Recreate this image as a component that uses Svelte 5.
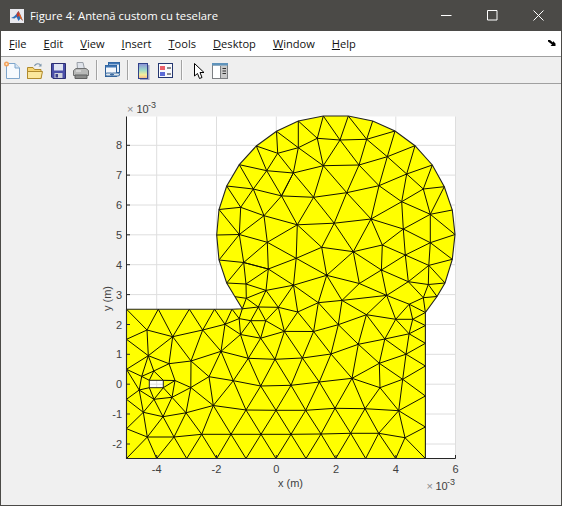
<script>
  const menus = ["File", "Edit", "View", "Insert", "Tools", "Desktop", "Window", "Help"];

  // mesh nodes, in page pixels
  const pts = {
    o0: [216.7, 235], o1: [219, 260], o2: [226.7, 283], o3: [235, 296.7], o4: [242.3, 308.8],
    o5: [219, 209.5], o6: [226.7, 186], o7: [239.3, 164.7], o8: [256.3, 146], o9: [276.5, 131.3],
    o10: [298.3, 121], o11: [323.3, 116], o12: [348.3, 116], o13: [372.7, 121], o14: [395, 131],
    o15: [415, 145.7], o16: [432.3, 165], o17: [444.3, 186.7], o18: [452.3, 210], o19: [455, 234.5],
    o20: [452.3, 259.3], o21: [445, 283], o22: [437, 296.5], o23: [425.4, 312.5],
    t0: [126.5, 309.2], t1: [158.3, 309.2], t2: [189.3, 309.2], t3: [214.5, 309.2], t4: [232, 309.2],
    l1: [126.5, 339.3], l2: [126.5, 369.3], l3: [126.5, 399.3], l4: [126.5, 428.7],
    b0: [126.5, 458.5], b1: [156.7, 458.5], b2: [186.7, 458.5], b3: [216.7, 458.5], b4: [246, 458.5],
    b5: [276, 458.5], b6: [306, 458.5], b7: [335.7, 458.5], b8: [365.7, 458.5], b9: [395.7, 458.5], b10: [425.4, 458.5],
    r1: [425.4, 325.5], r2: [425.4, 343.3], r3: [425.4, 366], r4: [425.4, 396], r5: [425.4, 427],
    h1: [149.3, 380.3], h2: [163.3, 380.3], h3: [149.3, 387.7], h4: [163.3, 387.7],
    a1: [147, 330], a2: [172.7, 336.7], a3: [202.7, 330], a4: [225, 324.3], a5: [148.3, 355.7],
    a6: [169, 363.7], a7: [191, 361], a8: [221, 351.3], a9: [240.5, 334.5], a10: [239.2, 318.6],
    a11: [250.7, 320.7], a12: [265.7, 320.7], a13: [258.3, 307], a14: [260.7, 338.2], a15: [284.4, 331.4],
    a16: [248.3, 358.3], a17: [275, 359.3], a18: [209, 376.7], a19: [233.3, 380.7], a20: [260.7, 386],
    a21: [175, 380.5], a22: [190.8, 387.5], a23: [172, 397.3], a24: [154, 399.3], a25: [139.2, 390],
    a26: [141.7, 376.4], a27: [153.8, 371], a28: [143.3, 412.3], a29: [163, 416.7], a30: [186, 412.8],
    a31: [213.3, 405.5], a32: [246, 410], a33: [276, 410.3], a34: [147.3, 437], a35: [174, 437],
    a36: [201.7, 434.3], a37: [231, 434.3], a38: [261, 434.3],
    c1: [297.7, 312], c2: [318.3, 302.7], c4: [313.6, 331.5], c5: [338.3, 324.7], c6: [366.4, 314.7],
    c7: [395.7, 319.3], c8: [412.7, 319.3], c9: [409.2, 304.2], c10: [409.1, 333.8], c11: [384.8, 339],
    c12: [358.3, 344.3], c13: [331, 354], c14: [302.4, 358], c15: [406, 354.2], c16: [379.3, 363.3],
    c17: [402.7, 379.3], c18: [352, 378.3], c19: [319.3, 382], c20: [291, 385.3], c21: [380, 387.7],
    c22: [398.7, 410.7], c23: [365, 408.7], c24: [335, 408.3], c25: [305.7, 410.3], c26: [291, 434.3],
    c27: [321, 434], c28: [350.7, 433.3], c29: [378.7, 433.3], c30: [405, 437.7],
    d1: [317.3, 138.3], d2: [340, 140], d3: [366.7, 139.3], d4: [298.3, 147.7], d5: [323.3, 165.7],
    d6: [359, 165], d7: [387.3, 156.7], d8: [293.3, 173], d9: [406.7, 174], d10: [423.3, 189],
    d11: [379, 185.7], d12: [346.7, 192.7], d13: [313.6, 197.3], d14: [281.5, 195.9], d15: [401.7, 201.7],
    d16: [430.3, 214.3], d17: [371, 219], d18: [334.2, 223.2], d19: [297.3, 224.8], d20: [403.3, 229],
    d21: [430.3, 242.7], d22: [382.3, 245], d23: [353.3, 251.7], d24: [321.7, 247.3], d25: [296.2, 258.3],
    d26: [405.3, 255], d27: [428.8, 265.4], d28: [381.4, 270], d29: [326.7, 275.3], d30: [359.3, 283.5],
    d31: [408.3, 281.7], d32: [428.3, 284.5], d33: [386.7, 295.4], d34: [293.5, 285.2], d36: [342, 300.4], d37: [423.3, 297.7],
    e1: [277.7, 153.3], e2: [266.7, 170.7], e3: [253.3, 189], e4: [240.7, 207.3], e5: [264, 215.7],
    e6: [239.3, 234.5], e7: [267.3, 242.3], e8: [243.7, 262.5], e9: [246, 284],
    f1: [268.3, 269], f2: [266, 290.4], f3: [246.3, 298.3], f4: [278.3, 307.3],
  };

  const edges = `t0-a1 t1-a1 t1-a2 t2-a2 t2-a3 t3-a3 t3-a4 t4-a4 t4-a10 a1-a2 a2-a3 a3-a4 a4-a10 a10-a11 a11-a12
    o4-a10 o4-f3 o4-a13 f3-a13 a11-a13 a13-a12 a13-f4 f4-a12 f4-a15 f4-c1 c1-a15 c1-c4 a15-c4 c1-c2 c1-d34 c2-c4
    f2-f4 f2-a13 f2-f3 f2-e9 e9-o2 e9-e8 o2-e8 f1-e8 f1-e9 f1-f2 f1-d34 f2-d34 f4-d34 d34-c2 d34-d25 e9-f3 o3-f3
    a4-a9 a4-a8 a9-a8 a10-a9 a11-a9 a11-a14 a12-a14 a9-a14 a12-a15 a14-a15 a9-a16 a14-a16 a14-a17 a15-a17 a15-c14
    a17-c14 a16-a17 a8-a16 a8-a19 a8-a18 a8-a7 a3-a7 a3-a8 a2-a6 a2-a7 a2-a5 a1-a5 l1-a1 l1-a5 l2-a5 a5-a26 a5-a27
    a5-a6 a6-a27 a6-a7 a6-a21 a7-a22 a7-a18 a18-a22 a18-a19 a18-a31 a19-a31 a19-a32 a19-a20 a19-a16 a16-a20 a17-a20
    a17-c20 a20-c20 a20-a32 a20-a33 c20-a33 a21-a22 a21-h2 a27-h1 a27-h2 a26-h1 a26-a27 a26-l2 a26-a25 a25-h3 a25-l2
    a25-l3 a25-a24 a25-a28 h3-a24 h4-a24 h4-a21 h4-a23 a21-a23 a24-a23 a23-a22 a23-a30 a22-a30 a22-a31 a30-a31 a24-a29
    a23-a29 a29-a30 a24-a28 l3-a28 a28-a29 l4-a28 a28-a34 l4-a34 a29-a34 a29-a35 a30-a35 a30-a36 a31-a36 a31-a37 a31-a32
    a32-a37 a32-a38 a32-a33 a33-a38 a33-c26 a33-c25 b0-a34 a34-b1 a34-a35 a35-b1 a35-b2 a36-b2 a36-b3 a37-b3 a37-b4
    a38-b4 a38-b5 c26-b5 c26-b6 c27-b6 c27-b7 c28-b7 c28-b8 c29-b8 c29-b9 c30-b9 c30-b10 a35-a36 a36-a37 a37-a38 a38-c26
    c26-c27 c27-c28 c28-c29 c29-c30
    o10-d4 o10-d1 o11-d1 o11-d2 o12-d2 o12-d3 o13-d3 o14-d3 o14-d7 o15-d7 o15-d9 o16-d9 o16-d10 o17-d10 o17-d16 o18-d16
    o19-d16 o19-d21 o20-d21 o20-d27 o21-d27 o21-d32 o22-d32 o22-d37 o23-d37 d32-d27 d32-d31 d32-d37 d37-c9 d37-d31
    d31-d27 d31-d26 d27-d26 d27-d21 d21-d26 d21-d20 d21-d16 d16-d20 d16-d15 d16-d10 d10-d15 d10-d9 d9-d15 d9-d7 d9-d11
    d15-d11 d15-d17 d15-d20 d20-d17 d20-d22 d20-d26 d26-d22 d26-d28 d31-d33 d31-d28 d33-d28 d33-d30 d28-d30 d28-d22
    d28-d23 d22-d23 d22-d17 d17-d23 d17-d18 d18-d23 d18-d24 d24-d23 d23-d29 d24-d29 d23-d30 d29-d30 d29-d36 d30-d36
    d36-c2 d29-c2 d29-d34 d24-d25 d25-d29 d19-d24 d19-d25 d19-d18 d13-d19 d13-d18 d13-d12 d12-d18 d12-d17 d12-d11
    d11-d17 d6-d11 d6-d12 d6-d7 d7-d11 d7-d3 d3-d6 d2-d6 d2-d3 d2-d5 d5-d6 d5-d12 d5-d13 d1-d5 d1-d2 d4-d1 d4-d5 d8-d5
    d8-d4 d8-d13 d14-d13 d14-d8 d14-d19 d36-d33 d36-c5 d36-c6 d33-c6 d33-c7 d33-c9 c9-c7 c9-c8 c9-o23 o23-c8 c8-c7 c7-c6
    c6-c5 c5-c2 c5-c4 c5-c12 c5-c13 c6-c12 c6-c11 c7-c11 c7-c10 c8-c10 c8-r1 c10-r1 c10-r2 c10-c11 c10-c15 c15-r2 c15-r3
    c15-c11 c15-c16 c15-c17 c17-r3 c17-r4 c22-r4 c22-r5 c30-r5 c11-c12 c11-c16 c12-c16 c12-c13 c12-c18 c16-c18 c16-c21
    c16-c17 c17-c21 c17-c22 c21-c22 c21-c23 c18-c21 c23-c22 c29-c22 c22-c30 c23-c29 c23-c28 c24-c28 c24-c27 c24-c23
    c24-c18 c24-c19 c25-c24 c25-c27 c25-c26 c19-c25 c20-c25 c18-c23 c18-c19 c19-c20 c19-c13 c13-c18 c13-c14 c14-c19 c14-c20
    c4-c13 c4-c14
    o9-e1 o9-d4 e1-d4 o8-e1 o8-e2 e1-e2 e1-d8 e2-d8 o7-e2 o7-e3 e2-e3 e2-d14 d8-d14 o6-e3 o6-e4 e3-e4 e3-d14 e3-e5 d14-e5
    e4-e5 o5-e4 o5-e6 e4-e6 e6-e5 e5-d19 o0-e6 e6-e7 e5-e7 d19-e7 e7-d25 o1-e6 e6-e8 e7-e8 o1-e8 e8-f1 e7-f1 f1-d25`
    .trim().split(/\s+/).map((e) => e.split("-"));

  const outlineKeys = ["t0", "t1", "t2", "t3", "t4", "o4", "o3", "o2", "o1", "o0", "o5", "o6", "o7", "o8", "o9", "o10", "o11", "o12", "o13", "o14", "o15", "o16", "o17", "o18", "o19", "o20", "o21", "o22", "o23", "r1", "r2", "r3", "r4", "r5", "b10", "b9", "b8", "b7", "b6", "b5", "b4", "b3", "b2", "b1", "b0", "l4", "l3", "l2", "l1"];
  const outline = "M" + outlineKeys.map((k) => pts[k].join(" ")).join("L") + "Z";
  const hole = "M149.3 380.3H163.3V387.7H149.3Z";

  const xTicks = [[-4, 156.7], [-2, 216.5], [0, 276.3], [2, 336], [4, 395.8], [6, 455.5]];
  const yTicks = [[-2, 444], [-1, 414], [0, 384.2], [1, 354.3], [2, 324.5], [3, 294.6], [4, 264.7], [5, 234.8], [6, 205], [7, 175.1], [8, 145.3]];
</script>

<div class="window">
  <header class="titlebar">
    <svg class="logo" width="16" height="16" viewBox="0 0 16 16">
      <rect x="1" y="1" width="14" height="14" fill="#e9e9ee" />
      <path d="M2 10l3-1.500L7.500 6 9.500 3l2 4 2.500 6-2.500-2.500-2 2.500-2-4-2 1.500z" fill="#2f6fb8" />
      <path d="M9.500 3l2 4 2.500 6-2.500-2.500-1.500-3z" fill="#e8641c" />
      <path d="M7.500 6L9.500 3l.5 4.500-1.500 2z" fill="#c8392b" />
    </svg>
    <span class="title">Figure 4: Antenă custom cu teselare</span>
    <div class="controls">
      <svg width="11" height="11" viewBox="0 0 11 11"><path d="M0 5.500H10.500" /></svg>
      <svg width="11" height="11" viewBox="0 0 11 11"><path d="M.5.500H10V10H.5Z" /></svg>
      <svg width="11" height="11" viewBox="0 0 11 11"><path d="M.5.500L10.500 10.500M10.500.500L.5 10.500" /></svg>
    </div>
  </header>

  <nav class="menubar">
    {#each menus as m}
      <span class="menu"><u>{m[0]}</u>{m.slice(1)}</span>
    {/each}
    <svg class="overflow" width="8" height="6" viewBox="0 0 8 6">
      <path d="M0 0H2L5 2.500V1L7.500 3.500V6H2.500L4 4.500L0 1.500Z" fill="#000" />
    </svg>
  </nav>

  <div class="toolbar">
    <div class="group g1">
      <svg width="18" height="20" viewBox="0 0 18 20">
        <path d="M3.500 3.500H12L16.500 8V18.500H3.500Z" fill="#f6fafe" stroke="#7fa6cc" />
        <path d="M12 3.500V8H16.500" fill="#d5e5f4" stroke="#7fa6cc" />
        <circle cx="3.500" cy="4" r="2.500" fill="#f3a15a" />
        <circle cx="3.500" cy="4" r="1" fill="#fbe6c8" />
      </svg>
      <svg width="18" height="20" viewBox="0 0 18 20">
        <path d="M1.500 7.500H7L8.500 9.500H15V18.500H1.500Z" fill="#f7d571" stroke="#b08a2e" />
        <path d="M1.500 18.500V11.500H16.500L15 18.500Z" fill="#fbe79c" stroke="#b08a2e" />
        <path d="M8.500 6C9.500 3.500 12.500 3 14.500 5" fill="none" stroke="#7f97ad" stroke-width="1.200" />
        <path d="M15.500 3.500V6.500H12.500Z" fill="#7f97ad" />
      </svg>
      <svg width="18" height="20" viewBox="0 0 18 20">
        <path d="M2.500 3.500H16.500V18.500H4L2.500 17Z" fill="#4a4fa8" stroke="#2c2f72" />
        <rect x="5" y="4" width="9" height="6.500" fill="#dfe4f2" />
        <rect x="5.500" y="13" width="8" height="5" fill="#cfd2dc" />
        <rect x="6.500" y="14" width="2.500" height="3.500" fill="#3b3f8c" />
      </svg>
      <svg width="18" height="20" viewBox="0 0 18 20">
        <path d="M5 2.500H11L12.500 9H5.500Z" fill="#dfe3ea" stroke="#9aa0a8" />
        <path d="M1.500 10.500L4 8.500H14L16.500 10.500V15.500H1.500Z" fill="#b8b9b8" stroke="#6f7070" />
        <path d="M3 15H15V18.500H3Z" fill="#8c8d8c" stroke="#5f6060" />
        <path d="M4 11H9" stroke="#eeeeee" />
      </svg>
    </div>
    <i class="sep"></i>
    <div class="group">
      <svg width="18" height="20" viewBox="0 0 18 20">
        <rect x="5.500" y="2.500" width="11" height="10" fill="#eaf1f8" stroke="#2a5c96" />
        <rect x="5.500" y="2.500" width="11" height="2" fill="#3f76b5" />
        <rect x="2.500" y="5.500" width="11" height="11" fill="#f4f7fb" stroke="#2a5c96" />
        <rect x="2.500" y="5.500" width="11" height="2" fill="#3f76b5" />
        <path d="M4 14.500H8M10 14.500H15" stroke="#3f6ea3" stroke-width="4" stroke-linecap="round" />
        <path d="M4 14.500H8M10 14.500H15" stroke="#dfe7ee" stroke-width="2" stroke-linecap="round" />
        <path d="M7 14.500H11" stroke="#3f6ea3" stroke-width="1.200" />
      </svg>
    </div>
    <i class="sep"></i>
    <div class="group g3">
      <svg width="18" height="20" viewBox="0 0 18 20">
        <rect x="3" y="5" width="9.500" height="15" fill="#9ea3c4" />
        <rect x="1.500" y="3.500" width="9" height="15" fill="url(#jet)" stroke="#30418a" />
        <defs>
          <linearGradient id="jet" x1="0" y1="0" x2="0" y2="1">
            <stop offset="0" stop-color="#8a8fd8" />
            <stop offset=".45" stop-color="#9fdcc8" />
            <stop offset=".75" stop-color="#f5ee9a" />
            <stop offset="1" stop-color="#f5b58a" />
          </linearGradient>
        </defs>
      </svg>
      <svg width="18" height="20" viewBox="0 0 18 20">
        <rect x="1.500" y="3.500" width="14" height="14" fill="#f8f9fc" stroke="#24366f" />
        <rect x="3" y="6" width="5" height="4" fill="#ea5f6a" />
        <rect x="3" y="12" width="5" height="4" fill="#5c6bd6" />
        <path d="M10 8H14M10 14H14" stroke="#222" />
      </svg>
    </div>
    <i class="sep"></i>
    <div class="group g4">
      <svg width="18" height="20" viewBox="0 0 18 20">
        <path d="M2.500 3.500V16L5.500 13.500L7.500 18.500L10 17.500L8 12.500H12Z" fill="#fff" stroke="#000" />
      </svg>
      <svg width="18" height="20" viewBox="0 0 18 20">
        <rect x="1.500" y="3.500" width="15" height="15" fill="#c8c8c8" stroke="#7c7f82" />
        <rect x="1" y="3" width="16" height="2.500" fill="#5f93bb" />
        <rect x="2" y="6" width="7" height="12" fill="#fff" />
        <path d="M9.500 6V18" stroke="#7c7f82" />
        <path d="M11.500 8.500H15M11.500 11H15M11.500 13.500H15" stroke="#333" />
      </svg>
    </div>
  </div>

  <main class="figure">
    <svg class="plot" width="560" height="421" viewBox="1 84 560 421">
      <rect x="126.500" y="116.500" width="329" height="342" fill="#fff" />
      {#each xTicks as t}
        <line x1={t[1]} x2={t[1]} y1="116.500" y2="458.500" class="grid" />
      {/each}
      {#each yTicks as t}
        <line x1="126.500" x2="455.500" y1={t[1]} y2={t[1]} class="grid" />
      {/each}

      <path d={outline + hole} fill="#ffff00" fill-rule="evenodd" />
      <path d={hole} fill="none" stroke="#222" stroke-width="1" />
      {#each edges as e}
        <line x1={pts[e[0]][0]} y1={pts[e[0]][1]} x2={pts[e[1]][0]} y2={pts[e[1]][1]} class="edge" />
      {/each}
      <path d={outline} fill="none" stroke="#222" stroke-width="1.100" />

      <path d="M126.500 116.500V458.500H455.500" fill="none" stroke="#262626" />
      {#each xTicks as t}
        <line x1={t[1]} x2={t[1]} y1="458.500" y2="455" class="tick" />
        <text x={t[1]} y="472.500" text-anchor="middle">{t[0]}</text>
      {/each}
      {#each yTicks as t}
        <line x1="126.500" x2="130" y1={t[1]} y2={t[1]} class="tick" />
        <text x="122" y={t[1] + 4} text-anchor="end">{t[0]}</text>
      {/each}

      <text x="127" y="113" class="mult">×</text>
      <text x="136.500" y="113">10</text>
      <text x="148" y="108" class="sup">-3</text>
      <text x="426.500" y="489.500" class="mult">×</text>
      <text x="435.500" y="489.500">10</text>
      <text x="447" y="484.500" class="sup">-3</text>

      <text x="290.500" y="487" text-anchor="middle">x (m)</text>
      <text transform="translate(111 298.500) rotate(-90)" text-anchor="middle">y (m)</text>
    </svg>
  </main>
</div>

<style>
  :global(body) {
    margin: 0;
    overflow: hidden;
  }
  .window {
    width: 562px;
    height: 506px;
    box-sizing: border-box;
    display: flex;
    flex-direction: column;
    border: 1px solid #4b4a47;
    border-top: 0;
    background: #f0f0f0;
    font-family: "Open Sans", "Noto Sans", sans-serif;
  }
  .titlebar {
    height: 31px;
    flex: none;
    display: flex;
    align-items: center;
    background: #4b4a47;
    color: #fff;
    font-size: 11.300px;
  }
  .logo {
    margin-left: 8px;
    margin-right: 5px;
  }
  .controls {
    margin-left: auto;
    display: flex;
    gap: 35px;
    padding-right: 17px;
  }
  .controls path {
    fill: none;
    stroke: #fff;
    stroke-width: 1;
  }
  .menubar {
    height: 25px;
    flex: none;
    display: flex;
    align-items: center;
    gap: 17px;
    padding-left: 8px;
    background: #fff;
    border-bottom: 1px solid #a0a0a0;
    font-size: 11.100px;
    color: #111;
  }
  .overflow {
    margin-left: auto;
    margin-right: 5px;
    margin-top: -1px;
  }
  .toolbar {
    height: 26px;
    flex: none;
    display: flex;
    align-items: center;
    padding-left: 2px;
    background: #efefef;
    border-bottom: 1px solid #a0a0a0;
  }
  .group {
    display: flex;
  }
  .g1 {
    gap: 5px;
  }
  .g3 {
    gap: 2px;
    margin-left: 3px;
  }
  .g4 {
    gap: 1px;
    margin-left: 4px;
  }
  .sep {
    width: 1px;
    height: 20px;
    margin: 0 6px;
    background: #a3a3a3;
    box-shadow: 1px 0 #fafafa;
  }
  .figure {
    flex: 1;
    min-height: 0;
  }
  .plot {
    display: block;
  }
  .grid {
    stroke: #dedede;
    stroke-width: 1;
  }
  .edge {
    stroke: #111100;
    stroke-width: 1;
  }
  .tick {
    stroke: #262626;
  }
  text {
    font-family: "Liberation Sans", Arial, sans-serif;
    font-size: 11px;
    fill: #404040;
  }
  .mult {
    fill: #8a8a8a;
  }
  .sup {
    font-size: 9px;
  }
</style>
